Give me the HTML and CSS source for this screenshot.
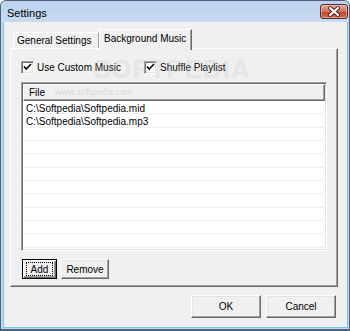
FILE: index.html
```html
<!DOCTYPE html>
<html lang="en">
<head>
  <meta charset="UTF-8">
  <title>Settings</title>
  <link rel="stylesheet" href="styles.css">
</head>
<body>

  <div class="window">
    <div class="titlebar">
      <span class="title">Settings</span>
      <div class="close">
        <svg width="28" height="15" viewBox="0 0 28 15">
          <path d="M10 4 L18 11 M18 4 L10 11" stroke="#4a1c16" stroke-width="4" stroke-linecap="round"/>
          <path d="M10 4 L18 11 M18 4 L10 11" stroke="#fff" stroke-width="2.2" stroke-linecap="round"/>
        </svg>
      </div>
    </div>

    <div class="client">
      <div class="tabs">
        <div class="tab">General Settings</div>
        <div class="tab active">Background Music</div>
      </div>

      <div class="panel">
        <div class="options">
          <label class="check">
            <span class="box">
              <svg width="11" height="11" viewBox="0 0 11 11"><path d="M2 4.5 L4.2 7 L9 2" fill="none" stroke="#000" stroke-width="1.6"/></svg>
            </span>
            Use Custom Music
          </label>
          <label class="check">
            <span class="box">
              <svg width="11" height="11" viewBox="0 0 11 11"><path d="M2 4.5 L4.2 7 L9 2" fill="none" stroke="#000" stroke-width="1.6"/></svg>
            </span>
            Shuffle Playlist
          </label>
        </div>

        <div class="list">
          <div class="list-head">File</div>
          <div class="list-body">
            <div class="row">C:\Softpedia\Softpedia.mid</div>
            <div class="row">C:\Softpedia\Softpedia.mp3</div>
          </div>
        </div>

        <div class="list-buttons">
          <div class="btn default small"><span class="focus">Add</span></div>
          <div class="btn remove">Remove</div>
        </div>
      </div>

      <div class="footer">
        <div class="btn wide">OK</div>
        <div class="btn wide">Cancel</div>
      </div>
    </div>

    <!-- watermark from the screenshot -->
    <div class="mark-big">SOFTPEDIA</div>
    <div class="mark-small">www.softpedia.com</div>
  </div>

</body>
</html>
```

FILE: styles.css
```css
body {
  margin: 0;
  font-family: "Liberation Sans", Arial, sans-serif;
  font-size: 10px;
  color: #000;
}

.window {
  position: relative;
  width: 350px;
  height: 331px;
  box-sizing: border-box;
  border: 1px solid #50607a;
  border-bottom-width: 2px;
  border-radius: 6px 6px 0 0;
  background: #c3d7ef;
  display: flex;
  flex-direction: column;
  overflow: hidden;
}

.titlebar {
  height: 21px;
  flex-shrink: 0;
  display: flex;
  align-items: flex-start;
  justify-content: space-between;
  padding: 0 1px 0 6px;
  background: linear-gradient(#bcd2ee, #c7daf1);
}

.title {
  font-size: 11px;
  line-height: 24px;
}

.close {
  margin-top: 3px;
  width: 26px;
  height: 13px;
  border: 1px solid #5a2a24;
  border-radius: 3px;
  background: linear-gradient(#e6a898, #d0715e 50%, #c0442e 51%, #d06a4e);
  box-shadow: inset 0 0 0 1px rgba(255, 255, 255, 0.35);
  display: flex;
  align-items: center;
  justify-content: center;
}

.close svg {
  display: block;
  margin: -1px;
}

.client {
  flex: 1;
  margin: 0 1px 1px 2px;
  border: 1px solid #6fc6ee;
  border-top: none;
  background: #f0f0f0;
  display: flex;
  flex-direction: column;
}

.tabs {
  display: flex;
  align-items: flex-end;
  height: 19px;
  margin-top: 7px;
  padding-left: 9px;
  position: relative;
  z-index: 1;
}

.tab {
  box-sizing: border-box;
  height: 16px;
  width: 86px;
  padding-left: 3px;
  line-height: 16px;
  border-top: 1px solid #fff;
  border-left: 1px solid #fff;
  border-right: 1px solid #a0a0a0;
  background: #f0f0f0;
  white-space: nowrap;
}

.tab.active {
  height: 21px;
  width: 93px;
  margin-bottom: -2px;
  padding-left: 4px;
  line-height: 17px;
  border-right-color: #696969;
  box-shadow: inset -1px 0 0 #a0a0a0;
}

.panel {
  box-sizing: border-box;
  width: 328px;
  height: 239px;
  margin-left: 6px;
  padding: 12px 0 0 10px;
  border-top: 1px solid #fff;
  border-left: 1px solid #fff;
  border-right: 1px solid #696969;
  border-bottom: 1px solid #696969;
  box-shadow: inset -1px -1px 0 #a0a0a0;
}

.options {
  display: grid;
  grid-template-columns: 123px auto;
  height: 13px;
}

.check {
  display: flex;
  align-items: center;
  gap: 3px;
  line-height: 13px;
  white-space: nowrap;
}

.box {
  box-sizing: border-box;
  width: 13px;
  height: 13px;
  border-top: 1px solid #a0a0a0;
  border-left: 1px solid #a0a0a0;
  border-right: 1px solid #fff;
  border-bottom: 1px solid #fff;
  box-shadow: inset 1px 1px 0 #696969, inset -1px -1px 0 #e3e3e3;
  background: #fff;
  display: flex;
  align-items: center;
  justify-content: center;
}

.box svg {
  display: block;
}

.list {
  box-sizing: border-box;
  width: 306px;
  height: 169px;
  margin-top: 8px;
  border-top: 1px solid #a0a0a0;
  border-left: 1px solid #a0a0a0;
  border-right: 1px solid #fff;
  border-bottom: 1px solid #fff;
  box-shadow: inset 1px 1px 0 #696969, inset -1px -1px 0 #e3e3e3;
  padding: 1px 1px 1px 1px;
  background: #fff;
  display: flex;
  flex-direction: column;
}

.list-head {
  box-sizing: border-box;
  height: 17px;
  flex-shrink: 0;
  padding-left: 5px;
  line-height: 15px;
  background: #f0f0f0;
  border-top: 1px solid #fff;
  border-left: 1px solid #fff;
  border-right: 1px solid #696969;
  border-bottom: 1px solid #696969;
  box-shadow: inset -1px -1px 0 #a0a0a0;
}

.list-body {
  flex: 1;
  background: repeating-linear-gradient(to bottom, #fff 0, #fff 12.33px, #efefef 12.33px, #efefef 13.33px);
}

.row {
  height: 13.33px;
  padding-left: 3px;
  line-height: 15px;
  white-space: nowrap;
}

.list-buttons {
  display: flex;
  gap: 4px;
  margin-top: 8px;
  padding-left: 1px;
}

.btn {
  box-sizing: border-box;
  height: 20px;
  display: flex;
  align-items: center;
  justify-content: center;
  background: #f0f0f0;
  border-top: 1px solid #fff;
  border-left: 1px solid #fff;
  border-right: 1px solid #696969;
  border-bottom: 1px solid #696969;
  box-shadow: inset -1px -1px 0 #a0a0a0, inset 1px 1px 0 #e3e3e3;
}

.btn.small {
  width: 35px;
}

.btn.remove {
  width: 48px;
}

.btn.default {
  border: 1px solid #000;
  box-shadow: inset 1px 1px 0 #fff, inset -1px -1px 0 #696969, inset -2px -2px 0 #a0a0a0;
}

.focus {
  box-sizing: border-box;
  width: 27px;
  height: 14px;
  border: 1px dotted #000;
  display: flex;
  align-items: center;
  justify-content: center;
}

.footer {
  display: flex;
  justify-content: flex-end;
  gap: 5px;
  margin-top: 8px;
  padding-right: 11px;
}

.btn.wide {
  width: 70px;
  height: 23px;
}

.mark-big {
  position: absolute;
  left: 92px;
  top: 53px;
  font-size: 26px;
  font-weight: bold;
  letter-spacing: 1px;
  color: rgba(255, 255, 255, 0.15);
  text-shadow: 0 0 1px rgba(140, 140, 140, 0.15);
  pointer-events: none;
}

.mark-small {
  position: absolute;
  left: 54px;
  top: 86px;
  font-size: 9px;
  color: rgba(150, 150, 150, 0.3);
  pointer-events: none;
}
```
